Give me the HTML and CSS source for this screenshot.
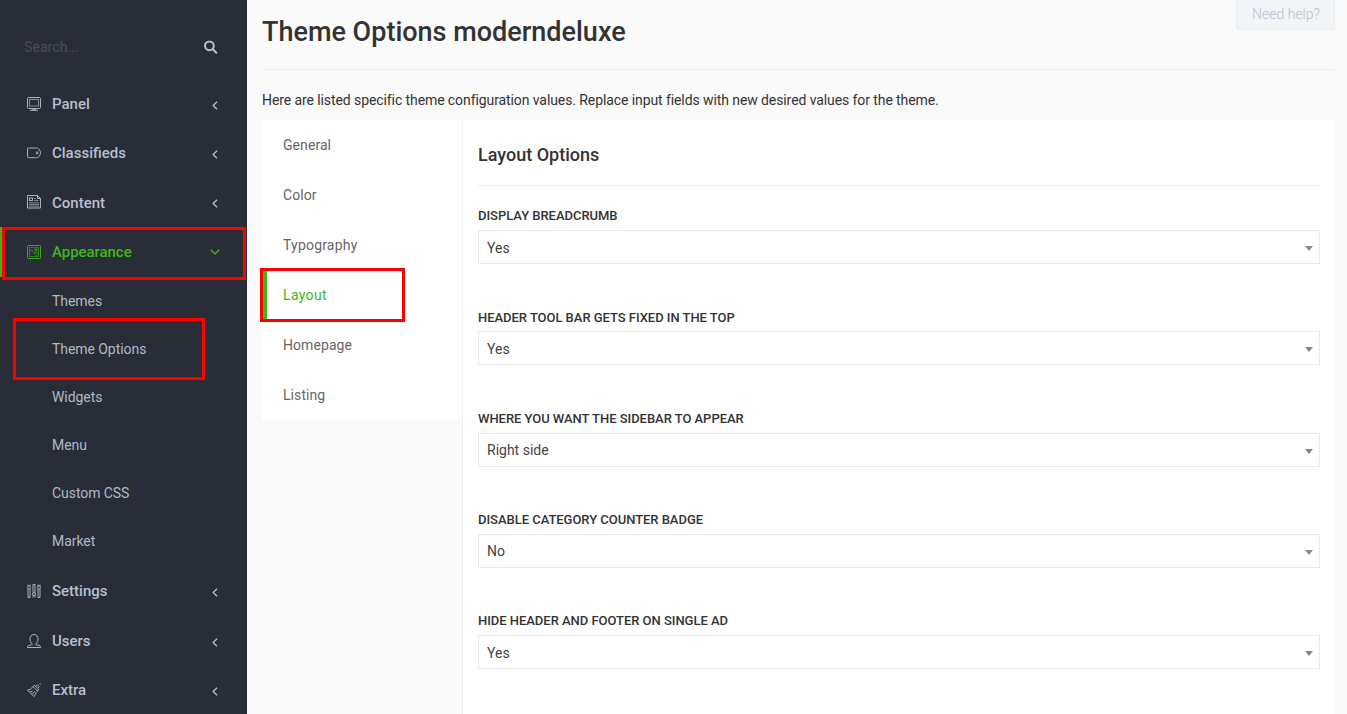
FILE: index.html
```html
<!DOCTYPE html>
<html lang="en">
<head>
<meta charset="utf-8">
<title>Theme Options</title>
<link rel="stylesheet" href="styles.css">
</head>
<body>
<div class="app">
  <aside class="sidebar">
    <div class="search">
      <span>Search...</span>
      <svg class="search-icon" width="14" height="14" viewBox="0 0 14 14"><circle cx="5.4" cy="5.8" r="4.4"/><path d="M8.8 9.200l3.500 3.500"/></svg>
    </div>
    <nav class="menu">
      <a class="item"><svg class="ico" viewBox="0 0 14 14"><rect x=".5" y=".5" width="13" height="11" rx="1"/><rect x="2.5" y="2.5" width="9" height="6.500" opacity=".7"/><path d="M5 12.300h4M3 13.400h8"/></svg><span>Panel</span><svg class="chev" viewBox="0 0 6 9"><path d="M5 .7L1.200 4.500 5 8.300"/></svg></a>
      <a class="item"><svg class="ico" viewBox="0 0 14 14"><path d="M1.500 2h8.200c1.200 0 1.900.6 2.600 1.500l1.200 2.500c.3.600.3 1.200 0 1.800L12.300 10.200c-.7 1-1.400 1.500-2.600 1.500H1.500c-.6 0-1-.4-1-1V3c0-.6.4-1 1-1z"/><circle cx="10.200" cy="6.900" r="1"/></svg><span>Classifieds</span><svg class="chev" viewBox="0 0 6 9"><path d="M5 .7L1.200 4.500 5 8.300"/></svg></a>
      <a class="item"><svg class="ico raised" viewBox="0 0 14 14"><path d="M.5.5h10l3 3v9.500H.5zM10.500.5v3h3"/><rect x="2.500" y="3" width="3" height="2.500"/><path d="M7 3.500h2M7 5.500h4.500M2 7.800h10M2 9.500h10M2 11.200h10" opacity=".7"/></svg><span>Content</span><svg class="chev raised-chev" viewBox="0 0 6 9"><path d="M5 .7L1.200 4.500 5 8.300"/></svg></a>
      <a class="item active"><svg class="ico" viewBox="0 0 14 14"><rect x=".5" y=".5" width="13" height="13" rx="1"/><rect x="2.500" y="2.500" width="9" height="9" opacity=".65"/><path d="M2.500 6.500l2-1.500 5.500 6M7.500 8l1.500-1 2.500 2.500" opacity=".8"/><circle cx="8.800" cy="4.800" r="1.100"/></svg><span>Appearance</span><svg class="chev-down" viewBox="0 0 10 6"><path d="M.8.8L5 5 9.200.8"/></svg></a>
      <div class="submenu">
        <a>Themes</a><a>Theme Options</a><a>Widgets</a><a>Menu</a><a>Custom CSS</a><a>Market</a>
      </div>
      <a class="item"><svg class="ico" viewBox="0 0 14 14"><circle cx="2" cy="3.500" r="1.500"/><circle cx="7" cy="10" r="1.500"/><circle cx="12" cy="3.500" r="1.500"/><path d="M1 2.200V.5M3 2.200V.5M1 5v8.500h2V5M6 8.700V.5h2v8.200M6 11.300v2.200M8 11.300v2.200M11 2.200V.5M13 2.200V.5M11 5v8.500h2V5"/></svg><span>Settings</span><svg class="chev" viewBox="0 0 6 9"><path d="M5 .7L1.200 4.500 5 8.300"/></svg></a>
      <a class="item"><svg class="ico" viewBox="0 0 14 14"><path d="M5.200 9.800C3.500 8.500 3 6.800 3 5c0-2.800 1.600-4.500 4-4.500S11 2.200 11 5c0 1.800-.5 3.500-2.200 4.800v.7c0 .6 4.700.5 4.700 2.100v.9H.5v-.9c0-1.600 4.700-1.500 4.700-2.100z"/></svg><span>Users</span><svg class="chev" viewBox="0 0 6 9"><path d="M5 .7L1.200 4.500 5 8.300"/></svg></a>
      <a class="item"><svg class="ico" viewBox="0 0 14 14"><path d="M.5 7c2.200 0 4.200-1.400 5.500-3.500l1.500-1.200 4.200 4-1 1.700c-1.700 1.200-2.700 3-2.900 4.700l-1 .8zM6 3.500l4.500 4.500M3 9l2.500-1M5.500 11l2-2.500M8.800 3.400l1.600-1.600 1.800 1.800-1.400 1.800M12.500.8h1.300"/></svg><span>Extra</span><svg class="chev" viewBox="0 0 6 9"><path d="M5 .7L1.200 4.500 5 8.300"/></svg></a>
    </nav>
  </aside>
  <main class="main">
    <header class="page-head"><h1>Theme Options moderndeluxe</h1></header>
    <p class="intro">Here are listed specific theme configuration values. Replace input fields with new desired values for the theme.</p>
    <div class="content">
      <nav class="tabs">
        <a>General</a><a>Color</a><a>Typography</a><a class="selected">Layout</a><a>Homepage</a><a>Listing</a>
      </nav>
      <section class="panel">
        <h2>Layout Options</h2>
        <div class="field"><label>DISPLAY BREADCRUMB</label><div class="select">Yes</div></div>
        <div class="field"><label>HEADER TOOL BAR GETS FIXED IN THE TOP</label><div class="select">Yes</div></div>
        <div class="field"><label>WHERE YOU WANT THE SIDEBAR TO APPEAR</label><div class="select">Right side</div></div>
        <div class="field"><label>DISABLE CATEGORY COUNTER BADGE</label><div class="select">No</div></div>
        <div class="field"><label>HIDE HEADER AND FOOTER ON SINGLE AD</label><div class="select">Yes</div></div>
      </section>
    </div>
  </main>
</div>
<a class="help">Need help?</a>
<div class="mark mark-appearance"></div>
<div class="mark mark-options"></div>
<div class="mark mark-layout"></div>
</body>
</html>
```
FILE: styles.css
```css
* { box-sizing: border-box; }
body { margin: 0; height: 714px; overflow: hidden; position: relative; background: #fafafa; color: #333; font: 14px/20px Roboto, sans-serif; }
.app { display: flex; height: 714px; }
.sidebar { flex: 0 0 247px; background: #292d37; color: #b6bfcf; overflow: hidden; }
.search { display: flex; align-items: center; justify-content: space-between; height: 79px; padding: 15px 29px 0 24px; color: #4a4d53; letter-spacing: .08px; }
.search-icon { fill: none; stroke: #b6c0d2; stroke-width: 2; stroke-linecap: round; }
.item { display: flex; align-items: center; height: 49.43px; padding: 0 28px 0 24px; border-left: 3px solid transparent; font-size: 15px; font-weight: 500; color: #b6bfcf; }
.item span { flex: 1; margin-left: 11px; }
.ico { width: 14px; height: 14px; fill: none; stroke: currentColor; stroke-width: .9; }
.chev { width: 6px; height: 9px; margin: 3px 1px 0 0; fill: none; stroke: currentColor; stroke-width: 1.3; }
.raised { margin-bottom: 1px; }
.raised-chev { margin-top: 1.5px; }
.chev-down { width: 10px; height: 6px; margin-right: -1px; fill: none; stroke: currentColor; stroke-width: 1.3; }
.item.active { color: #3fb618; border-left-color: #3fb618; letter-spacing: -.05px; }
.submenu { padding: .6px 0 1.2px; }
.submenu a { display: flex; align-items: center; height: 48px; padding-left: 52px; color: #b0b8c8; letter-spacing: -.06px; }
.main { flex: 1; padding: 0 12px 0 15px; }
.page-head { height: 70px; border-bottom: 1px solid #eee; }
h1 { margin: 0; padding-top: 17px; font-size: 27px; line-height: 30px; font-weight: 500; }
.intro { margin: 20px 0 10px; letter-spacing: -.09px; }
.content { display: flex; align-items: flex-start; }
.tabs { width: 200px; background: #fff; }
.tabs a { display: flex; align-items: center; height: 50px; padding-left: 16px; border-left: 5px solid transparent; color: #666; letter-spacing: .07px; }
.tabs a:nth-child(3) { letter-spacing: .2px; }
.tabs .selected { color: #3fb618; border-left-color: #3fb618; letter-spacing: .35px; }
.panel { flex: 1; height: 594px; padding: 0 15px; background: #fff; border-left: 1px solid #eee; }
h2 { height: 66px; margin: 0 0 20px; padding-top: 25px; border-bottom: 1px solid #eee; font-size: 18px; line-height: 20px; font-weight: 500; }
.field { height: 101.25px; }
label { display: block; height: 24px; padding-top: .3px; font-size: 13px; line-height: 20px; font-weight: 500; letter-spacing: -.035px; }
.select { display: flex; align-items: center; justify-content: space-between; height: 34px; padding: 1px 6px 0 8px; border: 1px solid #e8e8e8; color: #444; }
.select::after { content: ""; margin-top: 2px; border: 4px solid transparent; border-top: 5px solid #888; border-bottom: 0; }
.help { position: absolute; top: -4px; left: 1236px; width: 99px; height: 34px; padding: 7px 0 0 1px; text-align: center; background: #f1f5f8; border: 1px solid #eaedf0; border-radius: 3px; color: #b8bfd0; font-weight: 300; }
.mark { position: absolute; border: 3px solid #f00; }
.mark-appearance { left: 2px; top: 227px; width: 244px; height: 53px; }
.mark-options { left: 13px; top: 318px; width: 192px; height: 62px; }
.mark-layout { left: 260px; top: 268px; width: 145px; height: 54px; }
```
